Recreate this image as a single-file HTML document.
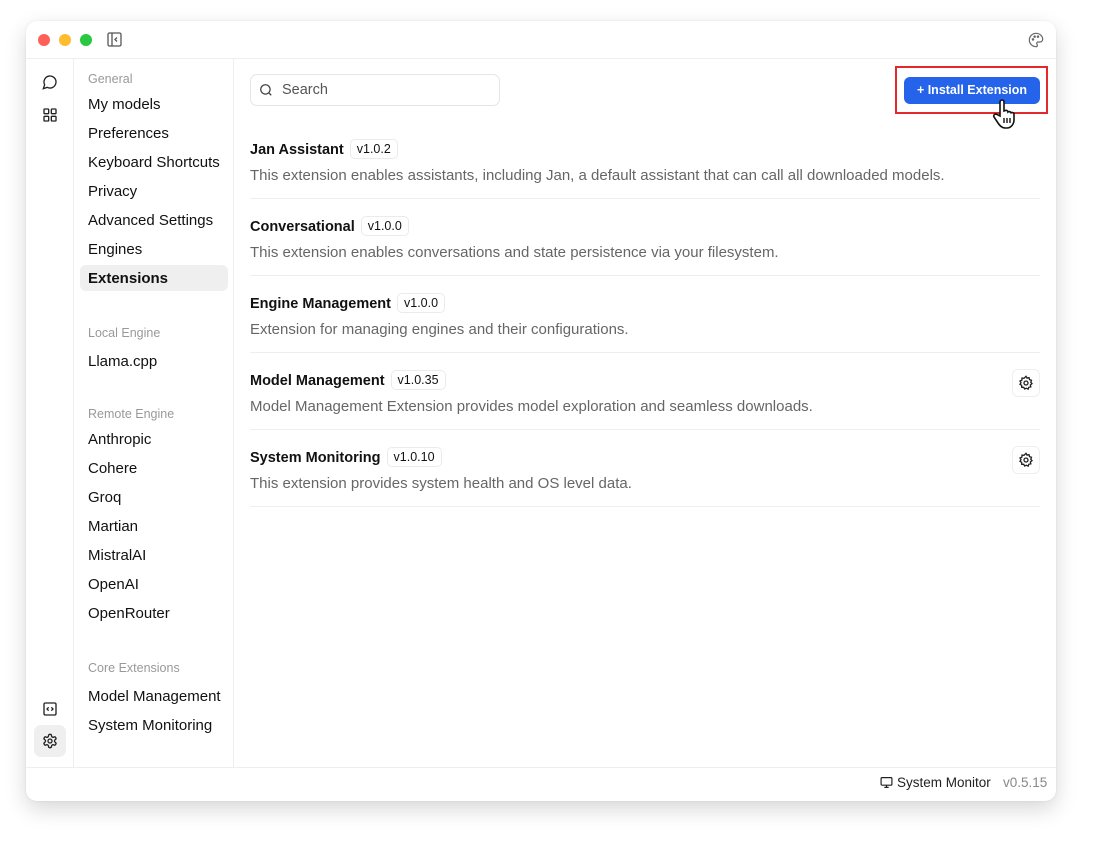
<!DOCTYPE html>
<html><head><meta charset="utf-8"><style>
*{box-sizing:border-box;margin:0;padding:0}
body{width:1093px;height:843px;background:#fff;font-family:"Liberation Sans",sans-serif;position:relative;overflow:hidden;color:#111}
.win{position:absolute;left:26px;top:21px;width:1030px;height:780px;background:#fff;border-radius:11px;box-shadow:0 8px 22px rgba(0,0,0,.16),0 0 2px rgba(0,0,0,.08);overflow:hidden}
.dot{position:absolute;top:13px;width:12px;height:12px;border-radius:50%}
.tb{position:absolute;left:0;top:37px;width:100%;height:1px;background:#eee}
.rail{position:absolute;left:47px;top:38px;width:1px;height:708px;background:#eee}
.side{position:absolute;left:207px;top:38px;width:1px;height:708px;background:#eee}
.foot{position:absolute;left:0;top:746px;width:100%;height:1px;background:#eee}
.s{position:absolute;left:62px;font-size:15px;color:#111}
.h{position:absolute;left:62px;font-size:12.5px;color:#999}
.sel{position:absolute;left:54px;top:244px;width:148px;height:26px;background:#efefef;border-radius:6px}
.t{position:absolute;left:224px;font-size:14.5px;font-weight:bold}
.v{display:inline-block;margin-left:6px;font-weight:normal;font-size:12.5px;border:1px solid #ebebeb;border-radius:5px;padding:2px 6px;vertical-align:1px}
.d{position:absolute;left:224px;font-size:15px;color:#666}
.ln{position:absolute;left:224px;width:790px;height:1px;background:#eee}
.gear{position:absolute;left:986px;width:28px;height:28px;border:1px solid #eee;border-radius:6px}
</style></head><body>
<div class="win">
<div class="dot" style="left:12px;background:#fe5f57"></div>
<div class="dot" style="left:33px;background:#febc2e"></div>
<div class="dot" style="left:54px;background:#28c840"></div>
<svg style="position:absolute;left:81px;top:11px" width="15" height="15" viewBox="0 0 15 15" fill="none" stroke="#555" stroke-width="1.3"><rect x="1" y="1" width="13" height="13" rx="1.5"/><line x1="5" y1="1" x2="5" y2="14"/><path d="M10 5.5 8 7.5 10 9.5"/></svg>
<svg style="position:absolute;left:1002px;top:11px" width="16" height="16" viewBox="0 0 24 24" fill="none" stroke="#666" stroke-width="1.8"><path d="M12 2a10 10 0 0 0 0 20c1.5 0 2-1 2-2 0-1.5-1-2-1-3s1-2 2-2h3a4 4 0 0 0 4-4c0-5-4.5-9-10-9z"/><circle cx="7.5" cy="11" r="1"/><circle cx="10" cy="7" r="1"/><circle cx="15" cy="7" r="1"/></svg>
<div class="tb"></div><div class="rail"></div><div class="side"></div><div class="foot"></div>
<svg style="position:absolute;left:16px;top:53px" width="16" height="16" viewBox="0 0 24 24" fill="none" stroke="#222" stroke-width="2"><path d="M7.9 20A9 9 0 1 0 4 16.1L2 22z"/></svg>
<svg style="position:absolute;left:16px;top:86px" width="16" height="16" viewBox="0 0 24 24" fill="none" stroke="#222" stroke-width="2"><rect x="3" y="3" width="7" height="7" rx="1"/><rect x="14" y="3" width="7" height="7" rx="1"/><rect x="3" y="14" width="7" height="7" rx="1"/><rect x="14" y="14" width="7" height="7" rx="1"/></svg>
<svg style="position:absolute;left:16px;top:680px" width="16" height="16" viewBox="0 0 24 24" fill="none" stroke="#222" stroke-width="2"><rect x="3" y="3" width="18" height="18" rx="2"/><path d="M10 9.5 7.5 12 10 14.5M14 9.5 16.5 12 14 14.5"/></svg>
<div style="position:absolute;left:8px;top:704px;width:32px;height:32px;background:#efefef;border-radius:7px"></div>
<svg style="position:absolute;left:16px;top:712px" width="16" height="16" viewBox="0 0 24 24" fill="none" stroke="#222" stroke-width="2"><path d="M12.2 2h-.4a2 2 0 0 0-2 2v.2a2 2 0 0 1-1 1.7l-.4.3a2 2 0 0 1-2 0l-.2-.1a2 2 0 0 0-2.7.7l-.2.4a2 2 0 0 0 .7 2.7l.2.1a2 2 0 0 1 1 1.7v.5a2 2 0 0 1-1 1.8l-.2.1a2 2 0 0 0-.7 2.7l.2.4a2 2 0 0 0 2.7.7l.2-.1a2 2 0 0 1 2 0l.4.3a2 2 0 0 1 1 1.7V20a2 2 0 0 0 2 2h.4a2 2 0 0 0 2-2v-.2a2 2 0 0 1 1-1.7l.4-.3a2 2 0 0 1 2 0l.2.1a2 2 0 0 0 2.7-.7l.2-.4a2 2 0 0 0-.7-2.7l-.2-.1a2 2 0 0 1-1-1.8v-.5a2 2 0 0 1 1-1.7l.2-.1a2 2 0 0 0 .7-2.7l-.2-.4a2 2 0 0 0-2.7-.7l-.2.1a2 2 0 0 1-2 0l-.4-.3a2 2 0 0 1-1-1.7V4a2 2 0 0 0-2-2z"/><circle cx="12" cy="12" r="3"/></svg>
<div class="sel"></div>
<div class="h" style="top:51px">General</div>
<div class="s" style="top:75px">My models</div>
<div class="s" style="top:104px">Preferences</div>
<div class="s" style="top:133px">Keyboard Shortcuts</div>
<div class="s" style="top:162px">Privacy</div>
<div class="s" style="top:191px">Advanced Settings</div>
<div class="s" style="top:220px">Engines</div>
<div class="s" style="top:249px;font-weight:bold">Extensions</div>
<div class="h" style="top:305px">Local Engine</div>
<div class="s" style="top:332px">Llama.cpp</div>
<div class="h" style="top:386px">Remote Engine</div>
<div class="s" style="top:410px">Anthropic</div>
<div class="s" style="top:439px">Cohere</div>
<div class="s" style="top:468px">Groq</div>
<div class="s" style="top:497px">Martian</div>
<div class="s" style="top:526px">MistralAI</div>
<div class="s" style="top:555px">OpenAI</div>
<div class="s" style="top:584px">OpenRouter</div>
<div class="h" style="top:640px">Core Extensions</div>
<div class="s" style="top:667px">Model Management</div>
<div class="s" style="top:696px">System Monitoring</div>
<div style="position:absolute;left:224px;top:53px;width:250px;height:32px;border:1px solid #e5e5e5;border-radius:7px"></div>
<svg style="position:absolute;left:233px;top:62px" width="14" height="14" viewBox="0 0 24 24" fill="none" stroke="#444" stroke-width="2.2"><circle cx="11" cy="11" r="8"/><path d="m21 21-4.3-4.3"/></svg>
<div style="position:absolute;left:256px;top:61px;font-size:14.5px;color:#555">Search</div>
<div style="position:absolute;left:869px;top:45px;width:153px;height:48px;border:2px solid #e5282c"></div>
<div style="position:absolute;left:878px;top:56px;width:136px;height:27px;background:#2563eb;border-radius:6px;color:#fff;font-size:12.5px;line-height:27px;text-align:center;font-weight:bold">+ Install Extension</div>
<svg style="position:absolute;left:966px;top:78px" width="30" height="32" viewBox="0 0 30 32"><path d="M8 3a2 2 0 0 1 4 0v9l1-.3a2 2 0 0 1 3 1v.3a2 2 0 0 1 3 .8 2 2 0 0 1 3 1.2v6c0 4-3 8-7 8h-2c-3 0-5-2-7-5l-4-6a2 2 0 0 1 3-2.5L8 17z" fill="#fff" stroke="#111" stroke-width="1.6"/><path d="M12 19v5M15 19v5M18 19v5" stroke="#111" stroke-width="1.4"/></svg>
<div class="t" style="top:118px">Jan Assistant<span class="v">v1.0.2</span></div>
<div class="d" style="top:146px">This extension enables assistants, including Jan, a default assistant that can call all downloaded models.</div>
<div class="ln" style="top:177px"></div>
<div class="t" style="top:195px">Conversational<span class="v">v1.0.0</span></div>
<div class="d" style="top:223px">This extension enables conversations and state persistence via your filesystem.</div>
<div class="ln" style="top:254px"></div>
<div class="t" style="top:272px">Engine Management<span class="v">v1.0.0</span></div>
<div class="d" style="top:300px">Extension for managing engines and their configurations.</div>
<div class="ln" style="top:331px"></div>
<div class="t" style="top:349px">Model Management<span class="v">v1.0.35</span></div>
<div class="d" style="top:377px">Model Management Extension provides model exploration and seamless downloads.</div>
<div class="gear" style="top:348px"></div>
<div class="ln" style="top:408px"></div>
<div class="t" style="top:426px">System Monitoring<span class="v">v1.0.10</span></div>
<div class="d" style="top:454px">This extension provides system health and OS level data.</div>
<div class="gear" style="top:425px"></div>
<div class="ln" style="top:485px"></div>
<svg style="position:absolute;left:992px;top:354px" width="16" height="16" viewBox="0 0 24 24" fill="none" stroke="#222" stroke-width="2"><circle cx="12" cy="12" r="3"/><path d="M12 2l1.5 2.6 3-.6.8 3 2.9 1-1 2.9L21 13l-2.4 1.8.6 3-3 .6-1 2.9-2.6-1.5L10 21l-1.4-2.6-3 .1-.1-3L3 14l1.5-2.6L3 9l2.8-1.3.2-3 3 .3z"/></svg>
<svg style="position:absolute;left:992px;top:431px" width="16" height="16" viewBox="0 0 24 24" fill="none" stroke="#222" stroke-width="2"><circle cx="12" cy="12" r="3"/><path d="M12 2l1.5 2.6 3-.6.8 3 2.9 1-1 2.9L21 13l-2.4 1.8.6 3-3 .6-1 2.9-2.6-1.5L10 21l-1.4-2.6-3 .1-.1-3L3 14l1.5-2.6L3 9l2.8-1.3.2-3 3 .3z"/></svg>
<svg style="position:absolute;left:854px;top:755px" width="13" height="13" viewBox="0 0 24 24" fill="none" stroke="#222" stroke-width="2.2"><rect x="2" y="3" width="20" height="14" rx="2"/><path d="M8 21h8M12 17v4"/></svg>
<div style="position:absolute;left:871px;top:754px;font-size:13.5px;color:#222">System Monitor</div>
<div style="position:absolute;left:977px;top:754px;font-size:13.5px;color:#888">v0.5.15</div>
</div>
</body></html>
